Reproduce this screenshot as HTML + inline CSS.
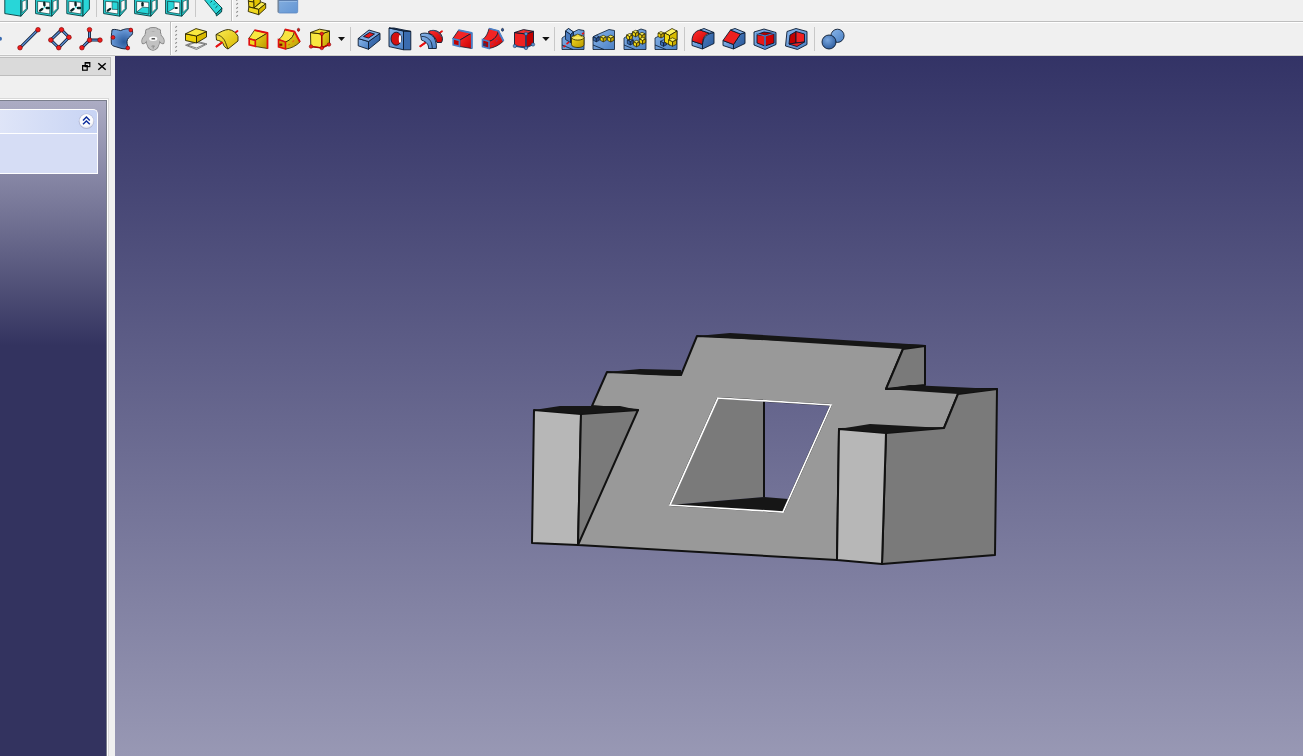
<!DOCTYPE html>
<html><head><meta charset="utf-8">
<style>
html,body{margin:0;padding:0;}
body{width:1303px;height:756px;overflow:hidden;position:relative;background:#f0f0f0;font-family:"Liberation Sans",sans-serif;}
.abs{position:absolute;}
#tb1line{left:0;top:21px;width:1303px;height:1px;background:#bebebe;}
#tb1white{left:0;top:22px;width:1303px;height:1px;background:#ffffff;}
#tb2line{left:0;top:55px;width:115px;height:1px;background:#c4c4c4;}
#tb2line2{left:115px;top:55px;width:1188px;height:1px;background:#cfcfca;}
#tb2light{left:0;top:54px;width:1303px;height:1px;background:#f5f5f5;}
#vsep{left:170px;top:21px;width:1px;height:34px;background:#bebebe;}
#vsepw{left:171px;top:22px;width:1px;height:33px;background:#ffffff;}
#view{left:115px;top:56px;width:1188px;height:700px;background:linear-gradient(to bottom,#333366 0%,#9898b4 100%);}
#title{left:-1px;top:57px;width:110px;height:17px;background:#dadada;border:1px solid #bdbdbd;}
#panel{left:-1px;top:100px;width:106px;height:660px;border:1px solid #7a7e8c;box-shadow:0 0 0 1px #fff,0 0 0 2px #d8d8d8;background:linear-gradient(to bottom,#acacc4 0px,#33335f 245px,#33335f 100%);}

#taskhead{left:-1px;top:109px;width:98px;height:24px;border-top:1px solid #fff;border-right:1px solid #fff;border-top-right-radius:5px;background:linear-gradient(to right,#dfe5f8,#c8d4f4);}
#taskbody{left:-1px;top:133px;width:98px;height:39px;border-top:1px solid #fff;border-right:1px solid #fff;border-bottom:1px solid #fff;background:#d6ddf5;}
</style></head><body>
<div class="abs" id="tb1line"></div>
<div class="abs" id="tb1white"></div>
<div class="abs" id="vsep"></div>
<div class="abs" id="vsepw"></div>
<div class="abs" id="tb2line"></div>
<div class="abs" id="tb2light"></div>
<div class="abs" id="tb2line2"></div>
<div class="abs" id="view"></div>
<div class="abs" id="title"></div>
<div class="abs" id="panel"></div>
<div class="abs" id="taskhead"></div>
<div class="abs" id="taskbody"></div>

<svg class="abs" style="left:0;top:0" width="1303" height="22" viewBox="0 0 1303 22">
<polygon points="4.8,-3 21.0,-3 21.0,16.2 4.8,13.6" fill="#28d6d8" stroke="#083c3e" stroke-width="0.9" stroke-linejoin="round"/>
<polygon points="21.0,-3 27.400000000000002,-3 27.400000000000002,9 21.0,16.2" fill="#28d6d8" stroke="#083c3e" stroke-width="0.9" stroke-linejoin="round"/>
<polygon points="22.2,1.6 26.2,-0.2 26.2,8.6 22.2,12.6" fill="#fbfbfb" stroke="#083c3e" stroke-width="0.6"/>
<polygon points="35.6,-3 51.8,-3 51.8,16.2 35.6,13.6" fill="#28d6d8" stroke="#083c3e" stroke-width="0.9" stroke-linejoin="round"/>
<polygon points="37.6,1.3 49.8,2.3 49.8,14 37.6,12.1" fill="#fbfbfb" stroke="#083c3e" stroke-width="0.7"/>
<polygon points="51.8,-3 58.2,-3 58.2,9 51.8,16.2" fill="#28d6d8" stroke="#083c3e" stroke-width="0.9" stroke-linejoin="round"/>
<polygon points="53.0,1.6 57.0,-0.2 57.0,8.6 53.0,12.6" fill="#fbfbfb" stroke="#083c3e" stroke-width="0.6"/>
<path d="M44.3,7.6 L44.5,5 M44.5,7.6 L47.1,7.9 M44.3,7.6 L41.800000000000004,9.6" stroke="#40e6e6" stroke-width="1"/>
<path d="M44.3,2.8 L44.400000000000006,5.2 M46.8,8 L48.8,8 M40.1,10.6 L42.2,9" stroke="#052424" stroke-width="2.4" stroke-linecap="round"/>
<polygon points="66.8,-3 83.0,-3 83.0,16.2 66.8,13.6" fill="#28d6d8" stroke="#083c3e" stroke-width="0.9" stroke-linejoin="round"/>
<polygon points="68.8,1.3 81.0,2.3 81.0,14 68.8,12.1" fill="#fbfbfb" stroke="#083c3e" stroke-width="0.7"/>
<polygon points="83.0,-3 89.4,-3 89.4,9 83.0,16.2" fill="#28d6d8" stroke="#083c3e" stroke-width="0.9" stroke-linejoin="round"/>
<path d="M75.5,7.6 L75.7,5 M75.7,7.6 L78.3,7.9 M75.5,7.6 L73.0,9.6" stroke="#40e6e6" stroke-width="1"/>
<path d="M75.5,2.8 L75.6,5.2 M78.0,8 L80.0,8 M71.3,10.6 L73.39999999999999,9" stroke="#052424" stroke-width="2.4" stroke-linecap="round"/>
<polygon points="103.6,-3 119.8,-3 119.8,16.2 103.6,13.6" fill="#28d6d8" stroke="#083c3e" stroke-width="0.9" stroke-linejoin="round"/>
<polygon points="105.6,1.3 117.8,2.3 117.8,14 105.6,12.1" fill="#fbfbfb" stroke="#083c3e" stroke-width="0.7"/>
<polygon points="119.8,-3 126.19999999999999,-3 126.19999999999999,9 119.8,16.2" fill="#28d6d8" stroke="#083c3e" stroke-width="0.9" stroke-linejoin="round"/>
<polygon points="121.0,1.6 125.0,-0.2 125.0,8.6 121.0,12.6" fill="#fbfbfb" stroke="#083c3e" stroke-width="0.6"/>
<polygon points="112.1,1.9 117.8,2.3 117.8,9.5 112.1,9.3" fill="#28d6d8" stroke="#083c3e" stroke-width="0.6"/>
<path d="M107.8,10.6 L110.19999999999999,8.8" stroke="#052424" stroke-width="2.2" stroke-linecap="round"/>
<polygon points="134.6,-3 150.79999999999998,-3 150.79999999999998,16.2 134.6,13.6" fill="#28d6d8" stroke="#083c3e" stroke-width="0.9" stroke-linejoin="round"/>
<polygon points="136.6,1.3 148.79999999999998,2.3 148.79999999999998,14 136.6,12.1" fill="#fbfbfb" stroke="#083c3e" stroke-width="0.7"/>
<polygon points="150.79999999999998,-3 157.2,-3 157.2,9 150.79999999999998,16.2" fill="#28d6d8" stroke="#083c3e" stroke-width="0.9" stroke-linejoin="round"/>
<polygon points="152.0,1.6 156.0,-0.2 156.0,8.6 152.0,12.6" fill="#fbfbfb" stroke="#083c3e" stroke-width="0.6"/>
<polygon points="136.6,12.1 142.6,7.2 148.79999999999998,7.6 148.79999999999998,14" fill="#28d6d8" stroke="#083c3e" stroke-width="0.6"/>
<path d="M142.5,3.2 L142.5,5.4" stroke="#052424" stroke-width="2.4" stroke-linecap="round"/>
<polygon points="165.6,-3 181.79999999999998,-3 181.79999999999998,16.2 165.6,13.6" fill="#28d6d8" stroke="#083c3e" stroke-width="0.9" stroke-linejoin="round"/>
<polygon points="167.6,1.3 179.79999999999998,2.3 179.79999999999998,14 167.6,12.1" fill="#fbfbfb" stroke="#083c3e" stroke-width="0.7"/>
<polygon points="181.79999999999998,-3 188.2,-3 188.2,9 181.79999999999998,16.2" fill="#28d6d8" stroke="#083c3e" stroke-width="0.9" stroke-linejoin="round"/>
<polygon points="183.0,1.6 187.0,-0.2 187.0,8.6 183.0,12.6" fill="#fbfbfb" stroke="#083c3e" stroke-width="0.6"/>
<polygon points="167.6,1.3 174.1,1.9 174.1,8.2 167.6,12.1" fill="#28d6d8" stroke="#083c3e" stroke-width="0.6"/>
<path d="M175.6,8 L176.79999999999998,8" stroke="#052424" stroke-width="2.2" stroke-linecap="round"/>
<!-- separators row1 -->
<rect x="96" y="0" width="1" height="17" fill="#c8c8c8"/>
<rect x="195" y="0" width="1" height="17" fill="#c8c8c8"/>
<rect x="231" y="0" width="1" height="21" fill="#bebebe"/>
<rect x="232" y="0" width="1" height="21" fill="#ffffff"/>
<g><path d="M236.3,0.7 L237.9,-0.9" stroke="#8a8a8a" stroke-width="1.1"/><path d="M236.3,4.7 L237.9,3.1" stroke="#8a8a8a" stroke-width="1.1"/><path d="M236.3,8.7 L237.9,7.1" stroke="#8a8a8a" stroke-width="1.1"/><path d="M236.3,12.7 L237.9,11.1" stroke="#8a8a8a" stroke-width="1.1"/><path d="M236.3,16.7 L237.9,15.1" stroke="#8a8a8a" stroke-width="1.1"/></g>
<!-- ruler -->
<g stroke="#063c3e" stroke-width="0.9" stroke-linejoin="round">
<polygon points="203,-2 211,-3 222,8 216,14" fill="#2ad6d8"/>
<polygon points="216,14 222,8 221.5,12 216.5,16" fill="#12a8aa"/>
</g>
<path d="M212,1 l-1.6,1.4 M215,3.5 l-1,1 M217.5,6 l-2,1.8" stroke="#063c3e" stroke-width="0.9"/>
<!-- yellow stairs -->
<g stroke="#2e2800" stroke-width="0.9" stroke-linejoin="round">
<polygon points="248.4,-3 253.7,-2 253.7,2.1 248.4,1.2" fill="#f4e030"/>
<polygon points="253.7,-2 260.3,-4 260.3,2.3 253.9,8" fill="#e2c400"/>
<polygon points="248.4,1.2 253.7,2.1 253.9,8 248.8,6.9" fill="#eed418"/>
<polygon points="253.9,8 261.3,2.1 265.7,3.7 258.7,9.4" fill="#f8ea50"/>
<polygon points="248.8,6.9 258.7,9.4 258.7,14.7 248.2,11.5" fill="#f0d820"/>
<polygon points="258.7,9.4 265.7,3.7 265.7,8.3 258.7,14.7" fill="#d8ba00"/>
</g>
<!-- blue box -->
<defs>
<linearGradient id="bbx" x1="0" y1="0" x2="1" y2="1"><stop offset="0" stop-color="#86b0e0"/><stop offset="1" stop-color="#6496d4"/></linearGradient>
<linearGradient id="bbxs" x1="0" y1="0" x2="1" y2="0"><stop offset="0" stop-color="#707070"/><stop offset="1" stop-color="#707070" stop-opacity="0"/></linearGradient>
</defs>
<rect x="278.2" y="-4" width="19.5" height="17" rx="1.5" fill="url(#bbx)" stroke="#5a86c0" stroke-width="0.8"/>
<rect x="278.6" y="-4" width="18.8" height="5.2" fill="#5d7fae"/>
<rect x="279" y="1" width="18" height="1" fill="#9cc0ea" opacity="0.8"/>
<rect x="277.6" y="0" width="2.2" height="12.5" fill="url(#bbxs)" opacity="0.8"/>
</svg>
<svg class="abs" style="left:0;top:22px" width="1303" height="34" viewBox="0 22 1303 34">
<defs>
<radialGradient id="blobg" cx="0.6" cy="0.65" r="0.6"><stop offset="0" stop-color="#2a5a9c"/><stop offset="1" stop-color="#6a9ad8"/></radialGradient>
<linearGradient id="yel" x1="0" y1="0" x2="1" y2="1"><stop offset="0" stop-color="#fbec55"/><stop offset="1" stop-color="#d8b800"/></linearGradient>
<linearGradient id="yeld" x1="0" y1="0" x2="1" y2="1"><stop offset="0" stop-color="#f0d820"/><stop offset="1" stop-color="#b89800"/></linearGradient>
<linearGradient id="blu" x1="0" y1="0" x2="1" y2="1"><stop offset="0" stop-color="#8ab6ea"/><stop offset="1" stop-color="#4a80c4"/></linearGradient>
<linearGradient id="blud" x1="0" y1="0" x2="1" y2="1"><stop offset="0" stop-color="#4a7cc0"/><stop offset="1" stop-color="#2a5a9a"/></linearGradient>
<linearGradient id="red" x1="0" y1="0" x2="1" y2="1"><stop offset="0" stop-color="#ff3030"/><stop offset="1" stop-color="#c80000"/></linearGradient>
<radialGradient id="sph" cx="0.4" cy="0.35" r="0.7"><stop offset="0" stop-color="#7aa8e0"/><stop offset="1" stop-color="#2a5a9c"/></radialGradient>
</defs>
<!-- partial icon at left edge -->
<circle cx="0" cy="38.7" r="2" fill="#3a6ab0"/>
<!-- line -->
<line x1="20" y1="47.7" x2="38" y2="29.7" stroke="#0a1a30" stroke-width="3"/>
<line x1="20" y1="47.7" x2="38" y2="29.7" stroke="#5a8cd0" stroke-width="1.4"/>
<g fill="#ee1c1c" stroke="#7a0000" stroke-width="0.6">
<circle cx="20" cy="47.7" r="2.3"/><circle cx="38" cy="29.7" r="2.3"/>
</g>
<!-- diamond -->
<polygon points="61.5,29.7 69,37.3 58.7,47.7 50.8,40" fill="none" stroke="#0a1a30" stroke-width="3"/>
<polygon points="61.5,29.7 69,37.3 58.7,47.7 50.8,40" fill="none" stroke="#5a8cd0" stroke-width="1.4"/>
<g fill="#ee1c1c" stroke="#7a0000" stroke-width="0.6">
<circle cx="61.5" cy="29.7" r="2.3"/><circle cx="69" cy="37.3" r="2.3"/><circle cx="58.7" cy="47.7" r="2.3"/><circle cx="50.8" cy="40" r="2.3"/>
</g>
<!-- axes -->
<path d="M89.5,29.7 L89.5,40.1 L100,40.1 M89.5,40.1 L81.9,47.7" fill="none" stroke="#0a1a30" stroke-width="3"/>
<path d="M89.5,29.7 L89.5,40.1 L100,40.1 M89.5,40.1 L81.9,47.7" fill="none" stroke="#5a8cd0" stroke-width="1.4"/>
<g fill="#ee1c1c" stroke="#7a0000" stroke-width="0.6">
<circle cx="89.5" cy="29.7" r="2.3"/><circle cx="89.5" cy="40.1" r="2.3"/><circle cx="100" cy="40.1" r="2.3"/><circle cx="81.9" cy="47.7" r="2.3"/>
</g>
<!-- blob -->
<path d="M112,29.8 C115,28.8 118,30 120.5,30.6 C124,29 128,28.2 131.5,29 C133,31 133,33.5 131.8,35 C129.5,37 127.2,38.5 127,41.5 C126.8,44 128,46 128,48.5 C124,49.8 120,48 116,46.8 C113,46 111.5,45.5 111.3,43 C111,38 111.6,33 112,29.8 Z" fill="url(#blobg)" stroke="#0a1a30" stroke-width="0.9"/>
<g fill="#ee1c1c" stroke="#7a0000" stroke-width="0.6">
<circle cx="130.8" cy="30" r="1.9"/><circle cx="113" cy="37.4" r="1.9"/><circle cx="127.8" cy="48" r="1.9"/>
</g>
<!-- sheep -->
<g fill="#808080" stroke="#808080" stroke-width="1.5" stroke-linejoin="round">
<path d="M147,34 C145,35.5 142.5,37.5 142.2,40 C142,42 142.3,43.5 143.2,43.6 C145,43 146.5,41.5 147.2,39.5 Z"/>
<path d="M159,34 C161,35.5 163.5,37.5 163.8,40 C164,42 163.7,43.5 162.8,43.6 C161,43 159.5,41.5 158.8,39.5 Z"/>
<circle cx="148.2" cy="31.5" r="2.3"/><circle cx="151" cy="30" r="2"/><circle cx="153.2" cy="29.6" r="1.9"/><circle cx="155.4" cy="30" r="2"/><circle cx="158" cy="31.5" r="2.3"/>
<circle cx="147.3" cy="34.3" r="1.9"/><circle cx="158.8" cy="34.3" r="1.9"/>
<path d="M146.5,31.5 L159.8,31.5 L159.5,40 C159.2,45 157.5,49.5 153,50 C148.5,49.5 146.8,45 146.5,40 Z"/>
</g>
<g fill="#c2c2c2">
<path d="M147,34 C145,35.5 142.5,37.5 142.2,40 C142,42 142.3,43.5 143.2,43.6 C145,43 146.5,41.5 147.2,39.5 Z"/>
<path d="M159,34 C161,35.5 163.5,37.5 163.8,40 C164,42 163.7,43.5 162.8,43.6 C161,43 159.5,41.5 158.8,39.5 Z"/>
<circle cx="148.2" cy="31.5" r="2.3"/><circle cx="151" cy="30" r="2"/><circle cx="153.2" cy="29.6" r="1.9"/><circle cx="155.4" cy="30" r="2"/><circle cx="158" cy="31.5" r="2.3"/>
<circle cx="147.3" cy="34.3" r="1.9"/><circle cx="158.8" cy="34.3" r="1.9"/>
<path d="M146.5,31.5 L159.8,31.5 L159.5,40 C159.2,45 157.5,49.5 153,50 C148.5,49.5 146.8,45 146.5,40 Z"/>
</g>
<ellipse cx="153.2" cy="38.8" rx="4.1" ry="2.2" fill="#fbfbfb"/>
<rect x="151.5" y="38" width="3.6" height="1.6" rx="0.4" fill="#505050"/>
<path d="M151.5,46.3 C152.5,45.8 153.8,45.8 154.8,46.3 M153.2,46.3 L153.2,48.5" fill="none" stroke="#7a7a7a" stroke-width="0.8"/>
<!-- toolbar boundary -->
<rect x="170" y="22" width="1" height="33" fill="#bebebe"/>
<rect x="171" y="22" width="1" height="33" fill="#ffffff"/>
<g><path d="M175.3,27.7 L176.9,26.1" stroke="#8a8a8a" stroke-width="1.1"/><path d="M175.3,31.7 L176.9,30.1" stroke="#8a8a8a" stroke-width="1.1"/><path d="M175.3,35.7 L176.9,34.1" stroke="#8a8a8a" stroke-width="1.1"/><path d="M175.3,39.7 L176.9,38.1" stroke="#8a8a8a" stroke-width="1.1"/><path d="M175.3,43.7 L176.9,42.1" stroke="#8a8a8a" stroke-width="1.1"/><path d="M175.3,47.7 L176.9,46.1" stroke="#8a8a8a" stroke-width="1.1"/><path d="M175.3,51.7 L176.9,50.1" stroke="#8a8a8a" stroke-width="1.1"/></g>
<!-- pad -->
<g stroke="#555" stroke-width="0.7" fill="none">
<polygon points="185.5,45.2 196,41 207,44 196.5,49.5"/>
<polygon points="187.5,45.2 196,42.4 205,44.2 196.5,48"/>
</g>
<g stroke="#2a2400" stroke-width="0.9" stroke-linejoin="round">
<polygon points="185.5,33.8 196.5,36 196.5,43 185.5,40.5" fill="#eed20a"/>
<polygon points="196.5,36 206.5,31.5 206.5,37 196.5,43" fill="#d8b800"/>
<polygon points="185.5,33.8 196,28.6 206.5,31.5 196.5,36" fill="#f8e840"/>
</g>
<!-- revolve -->
<line x1="216.5" y1="46.5" x2="237.5" y2="31" stroke="#e81010" stroke-width="1.8" stroke-linecap="round"/>
<path d="M216,34.6 C220,32 225,29.5 228.5,29.5 C233,30 236.5,33 238,36.5 L238,41 L228,49 C225.5,48 223.5,46 223,43.5 C222,41.5 219,40.5 216.5,40 Z" fill="url(#yel)" stroke="#2a2400" stroke-width="0.9" stroke-linejoin="round"/>
<path d="M216,34.6 C220,35 224,38 225.5,42.5 L228,49" fill="none" stroke="#2a2400" stroke-width="0.8"/>
<line x1="216.5" y1="46.5" x2="222" y2="42.5" stroke="#e81010" stroke-width="1.8" stroke-linecap="round"/>
<!-- loft -->
<polygon points="248.8,38.6 254.5,30.2 267.5,33 255.5,40.2" fill="#f8e840" stroke="#2a2400" stroke-width="0.8" stroke-linejoin="round"/>
<polygon points="255.5,40.2 267.5,33 267.5,48.5 255.5,46.5" fill="url(#yeld)" stroke="#2a2400" stroke-width="0.8" stroke-linejoin="round"/>
<path d="M254.5,30.2 L267.5,33 L267.5,48.8" fill="none" stroke="#e01010" stroke-width="1.8" stroke-linejoin="round"/>
<polygon points="249.2,38.8 255.3,40.4 255.3,46.3 249.2,44.8" fill="#f0d820" stroke="#e01010" stroke-width="1.7"/>
<!-- sweep -->
<path d="M278.5,39.6 C282,37.5 284,33 284.8,29.5 L294.5,31.5 C293.5,36 291,40 285.5,42 Z" fill="#f8e440" stroke="#2a2400" stroke-width="0.8" stroke-linejoin="round"/>
<path d="M285.5,42 C291,40 293.5,36 294.5,31.5 L300,42 C296,46 291,48.5 285.5,49 Z" fill="url(#yeld)" stroke="#2a2400" stroke-width="0.8" stroke-linejoin="round"/>
<path d="M288,45 l2,-0.8 M292.5,42 l1.5,-1.5 M296,37.5 l0.8,-1.5" stroke="#e87010" stroke-width="1.1"/>
<path d="M284.8,29.5 L294.5,31.5 L300,42" fill="none" stroke="#e01010" stroke-width="1.8"/>
<polygon points="278.5,39.6 285.5,42 285.5,49 278.5,46.8" fill="#c8a800" stroke="#e01010" stroke-width="1.6"/>
<rect x="279.3" y="43.6" width="3" height="2.2" fill="#900000"/>
<ellipse cx="298.5" cy="29.8" rx="1.2" ry="1.6" fill="#e01010" stroke="#400" stroke-width="0.5"/>
<!-- box yellow -->
<g stroke="#2a2400" stroke-width="0.9" stroke-linejoin="round">
<polygon points="310.5,32.5 321.6,34 321.6,47.8 310.8,46.5" fill="#f8e640"/>
<polygon points="321.6,34 329.5,31 329.5,44.5 321.6,47.8" fill="url(#yeld)"/>
<polygon points="310.5,32.5 319.5,29.2 329.5,31 321.6,34" fill="#f2dc30"/>
</g>
<path d="M321.8,33.8 L321.8,48 L311,46.5 M321.8,48 L329,44.5" fill="none" stroke="#b00000" stroke-width="1.4"/>
<g fill="#ee1c1c" stroke="#7a0000" stroke-width="0.5">
<circle cx="321.8" cy="33.8" r="1.8"/><circle cx="311" cy="46.5" r="1.8"/><circle cx="321.8" cy="48" r="1.8"/><circle cx="329" cy="44.5" r="1.8"/>
</g>
<polygon points="338,37 345,37 341.5,41" fill="#111"/>
<rect x="350" y="27" width="1" height="24" fill="#c8c8c8"/>
<!-- pocket -->
<g stroke="#0a1a30" stroke-width="0.9" stroke-linejoin="round">
<polygon points="358.2,38.5 368.5,41.5 368.5,49.3 358.2,45.8" fill="url(#blu)"/>
<polygon points="368.5,41.5 380,33.3 380,40 368.5,49.3" fill="url(#blud)"/>
<polygon points="358.2,38.5 369,30 380,33.3 368.5,41.5" fill="#7eacE4"/>
<polygon points="363.5,36.5 369.5,32.5 374.5,34 368.5,38" fill="#e81818"/>
</g>
<!-- hole -->
<g stroke="#0a1a30" stroke-width="0.9" stroke-linejoin="round">
<polygon points="389,28 403.5,31 403.5,49.8 389,46.6" fill="url(#blu)"/>
<polygon points="403.5,31 410.8,31.4 410.8,49.8 403.5,49.8" fill="#3a6cb0"/>
<polygon points="389,28 394,28 410.8,31.4 403.5,31" fill="#2a4a7a"/>
<ellipse cx="396.2" cy="38.7" rx="5.2" ry="6.5" fill="#d41010"/>
</g>
<ellipse cx="400" cy="39" rx="1.2" ry="4" fill="#fff"/>
<!-- groove -->
<line x1="420.3" y1="46.3" x2="442" y2="31.3" stroke="#e81010" stroke-width="1.8" stroke-linecap="round"/>
<path d="M428.5,31.5 C433,29.3 438,30.3 441,34.3 C443,37.5 442.8,40.5 441.5,42.5 L437,42.5 C435.5,37.5 433,34.5 429,33.5 Z" fill="url(#red)" stroke="#0a1a30" stroke-width="0.9" stroke-linejoin="round"/>
<path d="M431,30.5 C436,30 440,33 441.5,37" fill="none" stroke="#3a5a80" stroke-width="1"/>
<path d="M420.5,34 C425,32 431,33.5 434,37.5 C436,41 436.8,45 436.3,48.5 L428.5,48.5 C428.8,45 427,42 421.5,40 Z" fill="url(#blu)" stroke="#0a1a30" stroke-width="0.9" stroke-linejoin="round"/>
<path d="M421.5,36.5 C426,36 430,39 431.5,43 C432,45 432.3,47 432.3,48.5" fill="none" stroke="#0a1a30" stroke-width="0.8"/>
<line x1="420.3" y1="46.3" x2="424.5" y2="43.3" stroke="#e81010" stroke-width="1.8" stroke-linecap="round"/>
<!-- sub loft -->
<polygon points="452.8,38.6 458.5,30.2 471.8,33 459.8,40.2" fill="#f42424" stroke="#0a1a30" stroke-width="0.8" stroke-linejoin="round"/>
<polygon points="459.8,40.2 471.8,33 471.8,48.5 459.8,46.5" fill="url(#red)" stroke="#0a1a30" stroke-width="0.8" stroke-linejoin="round"/>
<path d="M458.5,30.2 L471.8,33 L471.8,48.8" fill="none" stroke="#4a80c8" stroke-width="1.8" stroke-linejoin="round"/>
<polygon points="453.2,38.8 459.4,40.4 459.4,46.3 453.2,44.8" fill="#c00000" stroke="#4a80c8" stroke-width="1.7"/>
<!-- sub sweep -->
<path d="M482.5,39.5 C486,37.5 488,33 489,28.5 L498.5,31 C497.5,35.5 495,39.5 489,41.5 Z" fill="#f42424" stroke="#0a1a30" stroke-width="0.8" stroke-linejoin="round"/>
<path d="M489,41.5 C495,39.5 497.5,35.5 498.5,31 L503.5,41 C499.5,45 494.5,47.5 489,48.5 Z" fill="url(#red)" stroke="#0a1a30" stroke-width="0.8" stroke-linejoin="round"/>
<path d="M491.5,44.5 l2,-0.8 M496,41.5 l1.5,-1.5 M499.5,37 l0.8,-1.5" stroke="#a03060" stroke-width="1.1"/>
<path d="M489,28.5 L498.5,31 L503.5,41" fill="none" stroke="#4a80c8" stroke-width="1.8"/>
<polygon points="482.5,39.5 489,41.5 489,48.5 482.5,46.6" fill="#b00000" stroke="#4a80c8" stroke-width="1.6"/>
<rect x="483.3" y="43.4" width="3" height="2.2" fill="#1a3a70"/>
<ellipse cx="502.5" cy="29.8" rx="1.1" ry="1.5" fill="#2a5aa0" stroke="#001" stroke-width="0.5"/>
<!-- sub box -->
<g stroke="#0a1a30" stroke-width="0.9" stroke-linejoin="round">
<polygon points="514.5,32.5 526,34 526,47.2 514.5,46" fill="#ee2222"/>
<polygon points="526,34 533.5,31.3 533.5,44.5 526,47.2" fill="#c00000"/>
<polygon points="514.5,32.5 523.5,29.6 533.5,31.3 526,34" fill="#f03030"/>
</g>
<path d="M526,33.8 L526,48 L514.8,46 M526,48 L533,44.5" fill="none" stroke="#2a4a7a" stroke-width="1.3"/>
<g fill="#5a90d0" stroke="#1a3050" stroke-width="0.5">
<circle cx="526" cy="33.8" r="1.7"/><circle cx="514.8" cy="46" r="1.7"/><circle cx="526" cy="48" r="1.7"/><circle cx="533" cy="44.5" r="1.7"/>
</g>
<polygon points="542.2,37 549.6,37 545.9,41" fill="#111"/>
<rect x="554" y="27" width="1" height="24" fill="#c8c8c8"/>
<!-- mirror -->
<polygon points="562,38 565.5,35.5 565.5,31 568.5,28.5 573.5,32 578.5,29.5 584,30.5 584,49.5 562,49.5" fill="url(#blu)" stroke="#0a1a30" stroke-width="0.8" stroke-linejoin="round"/>
<path d="M562,45 L573,49.5" fill="none" stroke="#0a1a30" stroke-width="0.8"/>
<polygon points="565.5,31 568.5,28.5 573.5,32 570.5,34.5" fill="#7eacE4" stroke="#0a1a30" stroke-width="0.8" stroke-linejoin="round"/>
<polygon points="565.5,31 570.5,34.5 570.5,42.5 565.5,39.5" fill="#4a7cc0" stroke="#0a1a30" stroke-width="0.8" stroke-linejoin="round"/>
<polygon points="570.5,34.5 573.5,32 573.5,40 570.5,42.5" fill="#2a5a9a" stroke="#0a1a30" stroke-width="0.8" stroke-linejoin="round"/>
<path d="M571.5,37.5 L571.5,44.5 C571.5,46.5 575,47.5 578,47.5 C581,47.5 584,46.5 584,44.5 L584,37.5 Z" fill="url(#yeld)" stroke="#2a2400" stroke-width="0.8"/>
<ellipse cx="577.8" cy="37.5" rx="6.2" ry="2.6" fill="#f8e860" stroke="#2a2400" stroke-width="0.8"/>
<path d="M573,37 L577.8,34 L582.5,37" fill="#f4e040" stroke="#2a2400" stroke-width="0.5"/>
<path d="M563.5,47 l2,-1.2 M566.5,44 l2.5,-1.8 M582,34 l2,-1" stroke="#e81010" stroke-width="1.6"/>
<!-- linear pattern -->
<polygon points="593,37 596.5,35 609,29.5 614.5,30.5 614.5,49.5 593,49.5" fill="url(#blu)" stroke="#0a1a30" stroke-width="0.8" stroke-linejoin="round"/>
<path d="M593,45 L604,49.5" fill="none" stroke="#0a1a30" stroke-width="0.8"/>
<polygon points="593.3,36.8 596.3,35.3 599.3,36.8 596.3,38.3" fill="#6a9ad8" stroke="#0a1a30" stroke-width="0.7" stroke-linejoin="round"/>
<polygon points="593.3,36.8 596.3,38.3 596.3,41.8 593.3,40.3" fill="#3a6cb0" stroke="#0a1a30" stroke-width="0.7" stroke-linejoin="round"/>
<polygon points="596.3,38.3 599.3,36.8 599.3,40.3 596.3,41.8" fill="#2a5090" stroke="#0a1a30" stroke-width="0.7" stroke-linejoin="round"/>
<polygon points="600.3,36.8 603.3,35.3 606.3,36.8 603.3,38.3" fill="#faf060" stroke="#2a2400" stroke-width="0.7" stroke-linejoin="round"/>
<polygon points="600.3,36.8 603.3,38.3 603.3,41.8 600.3,40.3" fill="#f0d810" stroke="#2a2400" stroke-width="0.7" stroke-linejoin="round"/>
<polygon points="603.3,38.3 606.3,36.8 606.3,40.3 603.3,41.8" fill="#c8a800" stroke="#2a2400" stroke-width="0.7" stroke-linejoin="round"/>
<polygon points="607.6,36.7 610.8,35.1 614.0,36.7 610.8,38.3" fill="#faf060" stroke="#2a2400" stroke-width="0.7" stroke-linejoin="round"/>
<polygon points="607.6,36.7 610.8,38.3 610.8,42.0 607.6,40.4" fill="#f0d810" stroke="#2a2400" stroke-width="0.7" stroke-linejoin="round"/>
<polygon points="610.8,38.3 614.0,36.7 614.0,40.4 610.8,42.0" fill="#c8a800" stroke="#2a2400" stroke-width="0.7" stroke-linejoin="round"/>
<!-- polar pattern -->
<polygon points="624,38 628,35.5 634,32 641,29 646,30.5 646,49.5 624,49.5" fill="url(#blu)" stroke="#0a1a30" stroke-width="0.8" stroke-linejoin="round"/>
<path d="M624,45 L635,49.5" fill="none" stroke="#0a1a30" stroke-width="0.8"/>
<polygon points="627.3,40.0 630.3,38.5 633.3,40.0 630.3,41.5" fill="#6a9ad8" stroke="#0a1a30" stroke-width="0.7" stroke-linejoin="round"/>
<polygon points="627.3,40.0 630.3,41.5 630.3,45.0 627.3,43.5" fill="#3a6cb0" stroke="#0a1a30" stroke-width="0.7" stroke-linejoin="round"/>
<polygon points="630.3,41.5 633.3,40.0 633.3,43.5 630.3,45.0" fill="#2a5090" stroke="#0a1a30" stroke-width="0.7" stroke-linejoin="round"/>
<polygon points="626.5,35.0 629.5,33.5 632.5,35.0 629.5,36.5" fill="#faf060" stroke="#2a2400" stroke-width="0.7" stroke-linejoin="round"/>
<polygon points="626.5,35.0 629.5,36.5 629.5,40.0 626.5,38.5" fill="#f0d810" stroke="#2a2400" stroke-width="0.7" stroke-linejoin="round"/>
<polygon points="629.5,36.5 632.5,35.0 632.5,38.5 629.5,40.0" fill="#c8a800" stroke="#2a2400" stroke-width="0.7" stroke-linejoin="round"/>
<polygon points="632.5,31.8 635.5,30.3 638.5,31.8 635.5,33.3" fill="#faf060" stroke="#2a2400" stroke-width="0.7" stroke-linejoin="round"/>
<polygon points="632.5,31.8 635.5,33.3 635.5,36.8 632.5,35.3" fill="#f0d810" stroke="#2a2400" stroke-width="0.7" stroke-linejoin="round"/>
<polygon points="635.5,33.3 638.5,31.8 638.5,35.3 635.5,36.8" fill="#c8a800" stroke="#2a2400" stroke-width="0.7" stroke-linejoin="round"/>
<polygon points="638.8,33.9 642.0,32.3 645.2,33.9 642.0,35.5" fill="#faf060" stroke="#2a2400" stroke-width="0.7" stroke-linejoin="round"/>
<polygon points="638.8,33.9 642.0,35.5 642.0,39.2 638.8,37.6" fill="#f0d810" stroke="#2a2400" stroke-width="0.7" stroke-linejoin="round"/>
<polygon points="642.0,35.5 645.2,33.9 645.2,37.6 642.0,39.2" fill="#c8a800" stroke="#2a2400" stroke-width="0.7" stroke-linejoin="round"/>
<polygon points="639.3,38.9 642.5,37.3 645.7,38.9 642.5,40.5" fill="#faf060" stroke="#2a2400" stroke-width="0.7" stroke-linejoin="round"/>
<polygon points="639.3,38.9 642.5,40.5 642.5,44.2 639.3,42.6" fill="#f0d810" stroke="#2a2400" stroke-width="0.7" stroke-linejoin="round"/>
<polygon points="642.5,40.5 645.7,38.9 645.7,42.6 642.5,44.2" fill="#c8a800" stroke="#2a2400" stroke-width="0.7" stroke-linejoin="round"/>
<polygon points="633.5,41.8 636.5,40.3 639.5,41.8 636.5,43.3" fill="#faf060" stroke="#2a2400" stroke-width="0.7" stroke-linejoin="round"/>
<polygon points="633.5,41.8 636.5,43.3 636.5,46.8 633.5,45.3" fill="#f0d810" stroke="#2a2400" stroke-width="0.7" stroke-linejoin="round"/>
<polygon points="636.5,43.3 639.5,41.8 639.5,45.3 636.5,46.8" fill="#c8a800" stroke="#2a2400" stroke-width="0.7" stroke-linejoin="round"/>
<!-- multi transform -->
<polygon points="655,38 659,36 665,33 677,30.5 677,49.5 655,49.5" fill="url(#blu)" stroke="#0a1a30" stroke-width="0.8" stroke-linejoin="round"/>
<path d="M655,45 L666,49.5" fill="none" stroke="#0a1a30" stroke-width="0.8"/>
<polygon points="660.5,41.3 663.5,39.8 666.5,41.3 663.5,42.8" fill="#6a9ad8" stroke="#0a1a30" stroke-width="0.7" stroke-linejoin="round"/>
<polygon points="660.5,41.3 663.5,42.8 663.5,46.3 660.5,44.8" fill="#3a6cb0" stroke="#0a1a30" stroke-width="0.7" stroke-linejoin="round"/>
<polygon points="663.5,42.8 666.5,41.3 666.5,44.8 663.5,46.3" fill="#2a5090" stroke="#0a1a30" stroke-width="0.7" stroke-linejoin="round"/>
<polygon points="658.0,33.0 661.0,31.5 664.0,33.0 661.0,34.5" fill="#faf060" stroke="#2a2400" stroke-width="0.7" stroke-linejoin="round"/>
<polygon points="658.0,33.0 661.0,34.5 661.0,38.0 658.0,36.5" fill="#f0d810" stroke="#2a2400" stroke-width="0.7" stroke-linejoin="round"/>
<polygon points="661.0,34.5 664.0,33.0 664.0,36.5 661.0,38.0" fill="#c8a800" stroke="#2a2400" stroke-width="0.7" stroke-linejoin="round"/>
<polygon points="664.5,33 672,28.5 677,31 669.5,35.5" fill="#faf060" stroke="#2a2400" stroke-width="0.8" stroke-linejoin="round"/>
<polygon points="664.5,33 669.5,35.5 669.5,45 664.5,42" fill="#f0d810" stroke="#2a2400" stroke-width="0.8" stroke-linejoin="round"/>
<polygon points="669.5,35.5 677,31 677,40 669.5,45" fill="#d8bc00" stroke="#2a2400" stroke-width="0.8" stroke-linejoin="round"/>
<polygon points="668.5,39.8 672.5,37.8 676.5,39.8 672.5,41.8" fill="#faf060" stroke="#2a2400" stroke-width="0.7" stroke-linejoin="round"/>
<polygon points="668.5,39.8 672.5,41.8 672.5,46.3 668.5,44.3" fill="#f0d810" stroke="#2a2400" stroke-width="0.7" stroke-linejoin="round"/>
<polygon points="672.5,41.8 676.5,39.8 676.5,44.3 672.5,46.3" fill="#c8a800" stroke="#2a2400" stroke-width="0.7" stroke-linejoin="round"/>
<rect x="684" y="27" width="1" height="24" fill="#c8c8c8"/>
<!-- fillet -->
<g stroke="#0a1a30" stroke-width="0.9" stroke-linejoin="round">
<polygon points="692,41 702.5,44.5 702.5,49 692,45.5" fill="url(#blu)"/>
<path d="M702.5,44.5 C703,38 706,34 714,32.5 L714,43.5 L702.5,49 Z" fill="url(#blud)"/>
<path d="M692,41 C692,35 695,31 700,30 L709.5,33.2 C705,34 702.5,38 702.5,44.5 Z" fill="url(#red)"/>
<polygon points="700,30 704,28.5 714,32.5 709.5,33.2" fill="#7eace4"/>
</g>
<!-- chamfer -->
<g stroke="#0a1a30" stroke-width="0.9" stroke-linejoin="round">
<polygon points="723,40.5 733.5,44.5 733.5,49 723,45.5" fill="url(#blu)"/>
<polygon points="733.5,44.5 740.5,34 745,32.5 745,43.5 733.5,49" fill="url(#blud)"/>
<polygon points="723,40.5 730.5,30 740.5,34 733.5,44.5" fill="#ee2020"/>
<polygon points="730.5,30 735,28.5 745,32.5 740.5,34" fill="#7eace4"/>
</g>
<!-- draft -->
<g stroke="#0a1a30" stroke-width="0.9" stroke-linejoin="round">
<polygon points="754,32 764,29 776,32.5 776,44.5 765,49.5 754,45" fill="url(#blu)"/>
<polygon points="757,34.5 765,35.5 765,46 757,43" fill="#e81818"/>
<polygon points="765,35.5 774,33.5 774,43 765,46" fill="#d00000"/>
<polygon points="757,34.5 764,32 774,33.5 765,35.5" fill="#b00000"/>
</g>
<path d="M765,35.5 L765,49.5" stroke="#4a80c8" stroke-width="1.5"/>
<path d="M756,33.5 L765,36 L775,33" stroke="#4a80c8" stroke-width="1.2" fill="none"/>
<!-- thickness -->
<g stroke="#0a1a30" stroke-width="0.9" stroke-linejoin="round">
<polygon points="787,31.5 796,28.5 807,31.5 807,44.5 797.5,49.5 785.5,46" fill="url(#blu)"/>
<polygon points="790,35 796,31.5 796,43 789,44" fill="#c00000"/>
<polygon points="796,31.5 804.5,34 804.5,42 796,43" fill="#f02020"/>
<polygon points="789,44 796,43 804.5,42 797,46.5" fill="#ee2222"/>
</g>
<rect x="814" y="27" width="1" height="24" fill="#c8c8c8"/>
<!-- boolean -->
<circle cx="837.5" cy="35.8" r="6.6" fill="url(#blu)" stroke="#0a1a30" stroke-width="0.9"/>
<circle cx="829" cy="42" r="7" fill="url(#sph)" stroke="#0a1a30" stroke-width="0.9"/>
</svg>
<svg class="abs" style="left:0;top:56px" width="115" height="130" viewBox="0 56 115 130">
<defs>
<radialGradient id="cbtn" cx="0.45" cy="0.35" r="0.65"><stop offset="0" stop-color="#ffffff"/><stop offset="0.75" stop-color="#fafafc"/><stop offset="1" stop-color="#e0e2ea"/></radialGradient>
</defs>
<!-- float icon -->
<g fill="none" stroke="#000" stroke-width="1.2">
<rect x="85.2" y="62.6" width="4.6" height="4"/>
<rect x="82.6" y="65.6" width="4.6" height="4.6"/>
</g>
<rect x="85" y="62" width="5" height="1.6" fill="#000"/>
<rect x="82.2" y="65" width="5.2" height="1.6" fill="#000"/>
<!-- close -->
<path d="M98.3,63.3 L105.7,69.7 M105.7,63.3 L98.3,69.7" stroke="#000" stroke-width="1.5"/>
<!-- collapse button -->
<circle cx="86.4" cy="121.3" r="7.7" fill="#b0b6d4"/>
<circle cx="86.5" cy="121.1" r="7" fill="url(#cbtn)"/>
<path d="M83,120.4 L86.4,117.1 L89.8,120.4 M83,124.3 L86.4,121 L89.8,124.3" fill="none" stroke="#0b2c9c" stroke-width="1.45"/>
</svg>
<!-- 3D model -->
<svg class="abs" style="left:0;top:0" width="1303" height="756" viewBox="0 0 1303 756">
 <g stroke="#111" stroke-width="2" stroke-linejoin="round">
  <!-- main front face -->
  <path fill="#999999" fill-rule="evenodd" d="M592,406 L607,372 L681,375 L697,336 L925,346 L903,349 L886,389 L997,389 L958,394 L944,428 L839,429 L837,560 L578,545 L580,414 L638,410 Z M718,398 L831,405 L783,512 L670,505 Z"/>
  <!-- right upper step face -->
  <polygon fill="#7a7a7a" points="903,349 925,346 925,385 886,389"/>
  <!-- right block side -->
  <polygon fill="#7a7a7a" points="886,433 944,428 958,394 997,389 995,555 882,564"/>
  <!-- right block front -->
  <polygon fill="#b7b7b7" points="839,429 886,433 882,564 837,560"/>
  <!-- left block front -->
  <polygon fill="#b7b7b7" points="534,410 581,414 578,545 532,543"/>
  <!-- left wedge -->
  <polygon fill="#7a7a7a" points="581,414 638,410 578,545"/>
 </g>
 <!-- top dark bands -->
 <g fill="#161616">
  <polygon points="534,410 560,406 620,406 638,410 581,414"/>
  <polygon points="607,372 640,369 681,370 681,376 650,375"/>
  <polygon points="697,336 730,333 925,345 903,349"/>
  <polygon points="886,389 910,385 997,389 958,394"/>
  <polygon points="839,429 870,424 944,428 886,433"/>
 </g>
 <!-- hole -->
 <polygon fill="#7a7a7a" points="718,398 764,402 764,497 670,505"/>
  <polygon fill="#161616" points="670,505 764,497 788,499 783,512"/>
 <line x1="764" y1="402" x2="764" y2="497" stroke="#111" stroke-width="2"/>
 <polygon fill="none" stroke="#fff" stroke-width="1.7" points="718,398 831,405 783,512 670,505"/>
</svg>
</body></html>
